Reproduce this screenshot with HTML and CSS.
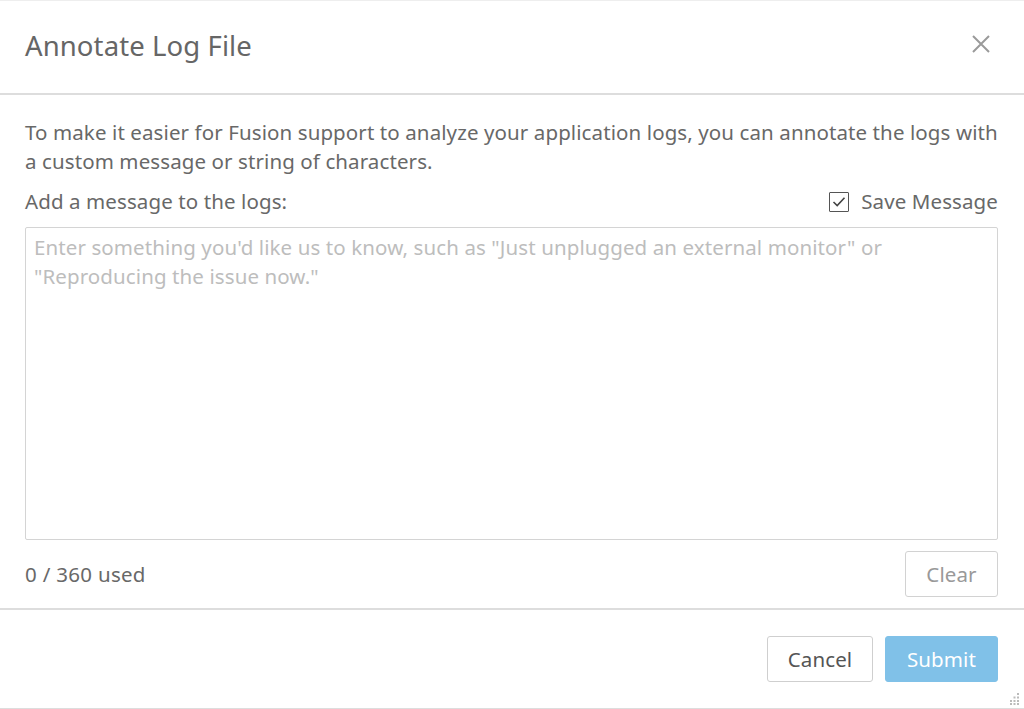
FILE: index.html
```html
<!DOCTYPE html>
<html lang="en">
<head>
<meta charset="utf-8">
<title>Annotate Log File</title>
<link rel="stylesheet" href="styles.css">
</head>
<body>
<div class="dialog">
  <header class="header">
    <h1 class="title">Annotate Log File</h1>
    <button class="close" aria-label="Close">
      <svg width="20" height="20" viewBox="0 0 20 20"><path d="M2 2 L18 18 M18 2 L2 18" stroke="#9a9a9a" stroke-width="2" fill="none"/></svg>
    </button>
  </header>
  <main class="content">
    <p class="intro">To make it easier for Fusion support to analyze your application logs, you can annotate the logs with<br>a custom message or string of characters.</p>
    <div class="label-row">
      <span class="label">Add a message to the logs:</span>
      <label class="save">
        <span class="checkbox">
          <svg width="14" height="12" viewBox="0 0 14 12"><path d="M1.5 6 L5.2 9.6 L12.5 1.8" stroke="#444" stroke-width="1.6" fill="none"/></svg>
        </span>
        <span>Save Message</span>
      </label>
    </div>
    <textarea class="message" placeholder="Enter something you'd like us to know, such as &quot;Just unplugged an external monitor&quot; or&#10;&quot;Reproducing the issue now.&quot;"></textarea>
    <div class="count-row">
      <span class="count">0 / 360 used</span>
      <button class="btn btn-clear">Clear</button>
    </div>
  </main>
  <footer class="footer">
    <button class="btn btn-cancel">Cancel</button>
    <button class="btn btn-submit">Submit</button>
  </footer>
  <svg class="grip" width="10" height="12" viewBox="0 0 10 12">
    <rect x="7" y="0" width="2" height="2" fill="#bbb"/>
    <rect x="7" y="3.5" width="2" height="2" fill="#bbb"/>
    <rect x="3.5" y="3.5" width="2" height="2" fill="#bbb"/>
    <rect x="7" y="7" width="2" height="2" fill="#bbb"/>
    <rect x="3.5" y="7" width="2" height="2" fill="#bbb"/>
    <rect x="0" y="7" width="2" height="2" fill="#bbb"/>
    <rect x="7" y="10" width="2" height="2" fill="#bbb"/>
    <rect x="3.5" y="10" width="2" height="2" fill="#bbb"/>
    <rect x="0" y="10" width="2" height="2" fill="#bbb"/>
  </svg>
</div>
</body>
</html>
```
FILE: styles.css
```css
* { box-sizing: border-box; }
html, body { margin: 0; padding: 0; background: #fff; }
body {
  font-family: "Noto Sans", "Open Sans", sans-serif;
  color: #686868;
  font-size: 20.5px;
  letter-spacing: 0.1px;
}
.dialog {
  position: relative;
  width: 1024px;
  height: 709px;
  display: flex;
  flex-direction: column;
  border-top: 1px solid #eee;
  border-bottom: 1px solid #ddd;
}
.header {
  height: 94px;
  flex: none;
  display: flex;
  align-items: center;
  justify-content: space-between;
  padding: 0 33px 0 25px;
  border-bottom: 2px solid #ddd;
}
.title {
  margin: 0;
  font-size: 27.5px;
  font-weight: 400;
  color: #666;
  margin-top: -4px;
}
.close {
  border: 0;
  background: none;
  padding: 0;
  width: 20px;
  height: 20px;
  margin-top: -6px;
  display: flex;
}
.content {
  padding: 23px 26px 11px 25px;
  display: flex;
  flex-direction: column;
}
.intro {
  margin: 0;
  line-height: 29px;
  white-space: nowrap;
}
.label-row {
  margin-top: 11px;
  display: flex;
  justify-content: space-between;
  align-items: center;
  line-height: 29px;
}
.save {
  display: flex;
  align-items: center;
  gap: 12px;
}
.checkbox {
  width: 20px;
  height: 20px;
  border: 1.5px solid #555;
  border-radius: 1px;
  display: flex;
  align-items: center;
  justify-content: center;
}
.message {
  margin-top: 11px;
  height: 313px;
  resize: none;
  border: 1px solid #d4d4d4;
  border-radius: 2px;
  padding: 5px 8px;
  font-family: inherit;
  font-size: 20.5px;
  letter-spacing: 0.1px;
  line-height: 29px;
  color: #555;
}
.message::placeholder { color: #bdbdbd; }
.count-row {
  margin-top: 11px;
  display: flex;
  justify-content: space-between;
  align-items: center;
}
.count { letter-spacing: 0.3px; }
.btn {
  font-family: inherit;
  font-size: 20.5px;
  letter-spacing: 0.1px;
  border-radius: 3px;
  background: #fff;
  border: 1px solid #d2d2d2;
  color: #999;
  height: 46px;
  padding: 0;
}
.btn-clear { width: 93px; height: 46px; }
.footer {
  flex: 1;
  border-top: 2px solid #ddd;
  display: flex;
  justify-content: flex-end;
  align-items: center;
  gap: 12px;
  padding: 0 26px 0 0;
}
.btn-cancel { width: 106px; color: #555; border-color: #cfcfcf; }
.btn-submit { width: 113px; background: #80c1e8; border-color: #80c1e8; color: #fff; }
.grip { position: absolute; right: 4px; bottom: 3px; }
```
